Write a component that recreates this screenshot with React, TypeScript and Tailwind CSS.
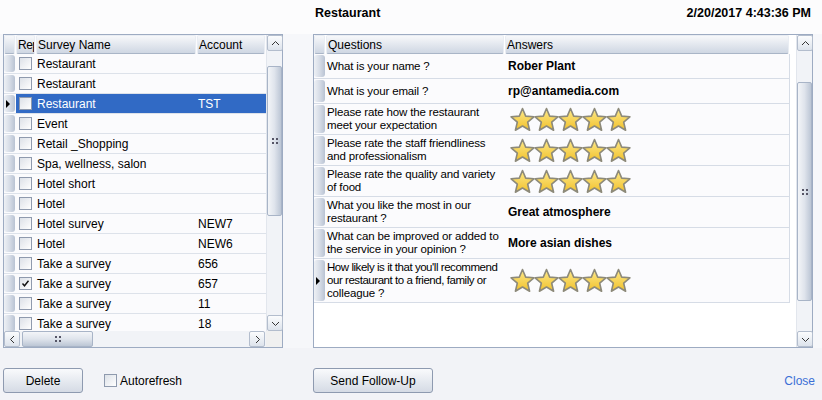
import React from "react";

const surveys = [
  { name: "Restaurant", acc: "" },
  { name: "Restaurant", acc: "" },
  { name: "Restaurant", acc: "TST", sel: true },
  { name: "Event", acc: "" },
  { name: "Retail _Shopping", acc: "" },
  { name: "Spa, wellness, salon", acc: "" },
  { name: "Hotel short", acc: "" },
  { name: "Hotel", acc: "" },
  { name: "Hotel survey", acc: "NEW7" },
  { name: "Hotel", acc: "NEW6" },
  { name: "Take a survey", acc: "656" },
  { name: "Take a survey", acc: "657", checked: true },
  { name: "Take a survey", acc: "11" },
  { name: "Take a survey", acc: "18" },
];

const answers = [
  { q: ["What is your name ?"], a: "Rober Plant", h: "h-[25px]" },
  { q: ["What is your email ?"], a: "rp@antamedia.com", h: "h-[25px]" },
  { q: ["Please rate how the restaurant", "meet your expectation"], stars: true, h: "h-[31px]" },
  { q: ["Please rate the staff friendliness", "and professionalism"], stars: true, h: "h-[31px]" },
  { q: ["Please rate the quality and variety", "of food"], stars: true, h: "h-[31px]" },
  { q: ["What you like the most in our", "restaurant ?"], a: "Great atmosphere", h: "h-[31px]" },
  { q: ["What can be improved or added to", "the service in your opinion ?"], a: "More asian dishes", h: "h-[31px]" },
  {
    q: ["How likely is it that you'll recommend", "our restaurant to a friend, family or", "colleague ?"],
    stars: true,
    h: "h-[44px]",
    active: true,
  },
];

function Check({ checked }: { checked?: boolean }) {
  return (
    <span className="w-[13px] h-[13px] shrink-0 border border-[#8f9aae] bg-gradient-to-br from-[#dde1e8] to-white flex items-center justify-center">
      {checked && (
        <svg width="9" height="9" viewBox="0 0 9 9">
          <polyline points="1.5,4.5 3.5,6.8 7.5,1.8" fill="none" stroke="#111" strokeWidth="1.4" />
        </svg>
      )}
    </span>
  );
}

function RowHead({ active }: { active?: boolean }) {
  return (
    <div className="w-[12px] shrink-0 self-stretch py-[1px] pr-[1px] relative">
      <div className="h-full rounded-[3px] bg-gradient-to-r from-[#eef1f5] via-[#d7dde7] to-[#b9c3d3]" />
      {active && (
        <svg className="absolute left-[2px] top-1/2 -translate-y-1/2" width="5" height="8" viewBox="0 0 5 8">
          <polygon points="0,0 4,4 0,8" fill="#000" />
        </svg>
      )}
    </div>
  );
}

function HeadCell({ w, children }: { w: string; children?: React.ReactNode }) {
  return (
    <div className={`${w} shrink-0 h-full pr-[1px]`}>
      <div className="h-full rounded-[2px] border border-[#e9edf3] border-b-[#a9b5c7] bg-gradient-to-b from-[#f7f8fa] to-[#cfd7e3] flex items-center pl-[1px] overflow-hidden whitespace-nowrap">
        {children}
      </div>
    </div>
  );
}

function Grip() {
  return (
    <svg width="6" height="6" viewBox="0 0 6 6">
      <rect x="0" y="0" width="2" height="2" fill="#556" />
      <rect x="4" y="0" width="2" height="2" fill="#556" />
      <rect x="0" y="4" width="2" height="2" fill="#556" />
      <rect x="4" y="4" width="2" height="2" fill="#556" />
    </svg>
  );
}

function ArrowBtn({ dir }: { dir: "up" | "down" | "left" | "right" }) {
  const paths: Record<string, string> = {
    up: "M1 5 L4.5 1.5 L8 5",
    down: "M1 2 L4.5 5.5 L8 2",
    left: "M5 1 L1.5 4.5 L5 8",
    right: "M2 1 L5.5 4.5 L2 8",
  };
  const vert = dir === "up" || dir === "down";
  return (
    <div className="w-[16px] h-[16px] shrink-0 rounded-[2px] border border-[#b3bdcd] bg-gradient-to-b from-[#fbfcfd] to-[#dde3ec] flex items-center justify-center">
      <svg width={vert ? 9 : 7} height={vert ? 7 : 9} viewBox={vert ? "0 0 9 7" : "0 0 7 9"}>
        <path d={paths[dir]} fill="none" stroke="#333" strokeWidth="1" />
      </svg>
    </div>
  );
}

function VScroll({ before, thumb }: { before: string; thumb: string }) {
  return (
    <div className="w-[16px] shrink-0 h-full flex flex-col bg-[#f1f3f7] border-l border-[#e2e6ed]">
      <ArrowBtn dir="up" />
      <div className={before} />
      <div className={`${thumb} rounded-[2px] border border-[#a8b4c7] bg-gradient-to-r from-[#f3f5f8] via-[#dfe4ec] to-[#bcc6d5] flex items-center justify-center`}>
        <Grip />
      </div>
      <div className="flex-1" />
      <ArrowBtn dir="down" />
    </div>
  );
}

function Stars() {
  const pts = "12,1 15.2,8.6 23.4,9.3 17.2,14.7 19.1,22.7 12,18.5 4.9,22.7 6.8,14.7 0.6,9.3 8.8,8.6";
  return (
    <svg width="122" height="25" viewBox="0 0 122 25">
      <defs>
        <linearGradient id="sg" x1="0" y1="0" x2="0" y2="1">
          <stop offset="0" stopColor="#fde98a" />
          <stop offset="1" stopColor="#f1c12c" />
        </linearGradient>
      </defs>
      {[0, 1, 2, 3, 4].map((i) => (
        <polygon
          key={i}
          transform={`translate(${i * 24 + 0.5},0.5)`}
          points={pts}
          fill="url(#sg)"
          stroke="#8d8a7a"
          strokeWidth="1.6"
          strokeLinejoin="round"
        />
      ))}
    </svg>
  );
}

function SurveyGrid() {
  return (
    <div className="w-[280px] h-full border border-[#9dabc2] bg-[#fbfbfd] flex flex-col">
      <div className="flex flex-1 min-h-0">
        <div className="w-[262px] h-full flex flex-col overflow-hidden">
          <div className="h-[19px] shrink-0 flex">
            <HeadCell w="w-[12px]" />
            <HeadCell w="w-[20px]">
              <span className="tracking-[-0.5px]">Rep</span>
            </HeadCell>
            <HeadCell w="w-[161px]">Survey Name</HeadCell>
            <HeadCell w="w-[69px]">Account</HeadCell>
          </div>
          {surveys.map((s, i) => (
            <div key={i} className="h-[20px] shrink-0 flex border-b border-[#dde2ea]">
              <RowHead active={s.sel} />
              <div className={`flex flex-1 ${s.sel ? "bg-[#316ac5] text-white" : ""}`}>
                <div className="w-[20px] flex items-center pl-[3px]">
                  <Check checked={s.checked} />
                </div>
                <div className="w-[161px] flex items-center pl-[1px]">{s.name}</div>
                <div className="flex-1 flex items-center pl-[1px]">{s.acc}</div>
              </div>
            </div>
          ))}
        </div>
        <VScroll before="h-[15px]" thumb="h-[150px]" />
      </div>
      <div className="h-[16px] shrink-0 flex">
        <div className="w-[262px] flex bg-[#f1f3f7]">
          <ArrowBtn dir="left" />
          <div className="w-[2px]" />
          <div className="w-[71px] rounded-[2px] border border-[#a8b4c7] bg-gradient-to-b from-[#f3f5f8] via-[#dfe4ec] to-[#bcc6d5] flex items-center justify-center">
            <Grip />
          </div>
          <div className="flex-1" />
          <ArrowBtn dir="right" />
          <div className="w-[1px]" />
        </div>
        <div className="flex-1 bg-[#f0f0f0]" />
      </div>
    </div>
  );
}

function AnswerGrid() {
  return (
    <div className="w-[500px] h-full border border-[#9dabc2] bg-white flex">
      <div className="w-[482px] h-full flex flex-col">
        <div className="h-[19px] shrink-0 flex">
          <HeadCell w="w-[12px]" />
          <HeadCell w="w-[179px]">Questions</HeadCell>
          <HeadCell w="w-[285px]">Answers</HeadCell>
        </div>
        {answers.map((r, i) => (
          <div key={i} className={`${r.h} w-[476px] shrink-0 flex border-b border-r border-[#d6dce6] bg-[#fbfbfd]`}>
            <RowHead active={r.active} />
            <div className="w-[179px] flex flex-col justify-center pl-[1px] leading-[13px] whitespace-nowrap text-[11.5px]">
              {r.q.map((l, j) => (
                <span key={j} className={l.length > 35 ? "tracking-[-0.45px]" : "tracking-[-0.15px]"}>
                  {l}
                </span>
              ))}
            </div>
            <div className="flex-1 flex items-center pl-[3px] font-bold text-[12px]">
              {r.stars ? (
                <div className="pl-[2px]">
                  <Stars />
                </div>
              ) : (
                r.a
              )}
            </div>
          </div>
        ))}
      </div>
      <div className="flex-1" />
      <VScroll before="h-[31px]" thumb="h-[219px]" />
    </div>
  );
}

function Btn({ w, children }: { w: string; children: React.ReactNode }) {
  return (
    <button className={`${w} h-[25px] rounded-[3px] border border-[#8e9ab0] bg-gradient-to-b from-[#f9fafc] to-[#d5dbe5] text-[12px] text-black`}>
      {children}
    </button>
  );
}

export default function App() {
  return (
    <div className="w-[822px] h-[400px] flex flex-col bg-[#f6f7fa] text-[12px] text-black font-['Liberation_Sans',Arial,sans-serif] overflow-hidden">
      <div className="h-[34px] shrink-0 flex bg-[#fcfcfd]">
        <div className="w-[315px]" />
        <div className="flex-1 flex justify-between items-start pt-[6px] pr-[11px] font-bold text-[12.5px] leading-[14px]">
          <span>Restaurant</span>
          <span>2/20/2017 4:43:36 PM</span>
        </div>
      </div>
      <div className="h-[314px] shrink-0 flex">
        <div className="ml-[3px]">
          <SurveyGrid />
        </div>
        <div className="ml-[30px]">
          <AnswerGrid />
        </div>
      </div>
      <div className="flex-1 flex items-start pt-[20px] bg-[#f2f3f7]">
        <div className="w-[313px] shrink-0 flex items-start">
          <div className="ml-[3px]">
            <Btn w="w-[80px]">Delete</Btn>
          </div>
          <label className="ml-[21px] h-[25px] flex items-center gap-[3px]">
            <Check />
            <span>Autorefresh</span>
          </label>
        </div>
        <Btn w="w-[120px]">Send Follow-Up</Btn>
        <div className="flex-1" />
        <span className="mr-[7px] h-[25px] flex items-center text-[#3b6fd6]">Close</span>
      </div>
    </div>
  );
}
